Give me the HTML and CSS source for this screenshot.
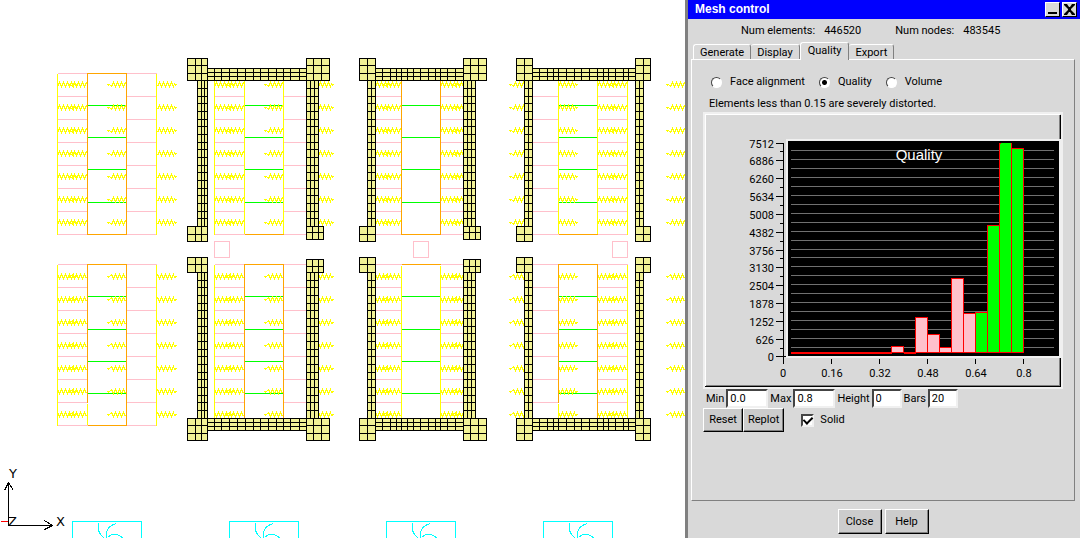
FILE: index.html
```html
<!DOCTYPE html>
<html lang="en">
<head>
    <meta charset="utf-8">
    <title>Mesh control</title>
    <link rel="stylesheet" href="styles.css">
</head>
<body>
    <main class="viewport">
        <svg class="mesh" role="img" aria-label="Mesh view">
            <defs>
                <!-- rungs of the upright beams, three cells per 23px -->
                <pattern id="rungs" patternUnits="userSpaceOnUse" x="0" y="79.5" width="4" height="23">
                    <rect class="cell" width="4" height="23"/>
                    <path class="edge" d="M0 .5h4M0 8.5h4M0 16.5h4"/>
                </pattern>
                <path id="coil-r" d="M0 2L2-2L4 2L6-2L8 2L10-2L12 2L14-2L16 2L17-1L18 0H19M18-1V1"/>
                <path id="coil-l" d="M0 0H3L5 2L7-2L9 2L11-2L13 2L15-2L17 2L19-2M2-1V1"/>
                <g id="springs-r" class="spring">
                    <use href="#coil-r" y="84"/><use href="#coil-r" y="107"/><use href="#coil-r" y="130"/>
                    <use href="#coil-r" y="153"/><use href="#coil-r" y="176"/><use href="#coil-r" y="199"/>
                    <use href="#coil-r" y="222"/>
                </g>
                <g id="springs-l" class="spring">
                    <use href="#coil-l" y="84"/><use href="#coil-l" y="107"/><use href="#coil-l" y="130"/>
                    <use href="#coil-l" y="153"/><use href="#coil-l" y="176"/><use href="#coil-l" y="199"/>
                    <use href="#coil-l" y="222"/>
                </g>
                <g id="core">
                    <path class="pink" d="M0 73H99M0 234H99M0 96H30M0 119H30M0 142H30M0 165H30M0 188H30M0 211H30M69 96H99M69 119H99M69 142H99M69 165H99M69 188H99M69 211H99"/>
                    <path class="green" d="M30 105H69M30 137H69M30 169H69M30 202H69"/>
                </g>
                <g id="half">
                    <use href="#core" x="57"/><use href="#core" x="214"/><use href="#core" x="371"/><use href="#core" x="528"/>
                    <path class="yellow" d="M57 73V234M156 73V234M214 73V234M627 73V234"/>
                    <use href="#springs-r" x="57"/><use href="#springs-l" x="67"/><use href="#springs-l" x="106"/><use href="#springs-r" x="157"/>
                    <use href="#springs-r" x="214"/><use href="#springs-l" x="224"/><use href="#springs-l" x="263"/><use href="#springs-r" x="314"/>
                    <use href="#springs-r" x="371"/><use href="#springs-l" x="381"/><use href="#springs-r" x="440"/><use href="#springs-l" x="450"/>
                    <use href="#springs-l" x="508"/><use href="#springs-r" x="558"/><use href="#springs-r" x="597"/><use href="#springs-l" x="607"/>
                    <use href="#springs-l" x="665"/>
                </g>
                <g id="frames">
                    <g class="upright">
                        <rect x="197" y="80" width="10" height="146"/><rect x="306" y="80" width="12" height="146"/>
                        <rect x="367" y="80" width="8" height="146"/><rect x="463" y="80" width="12" height="146"/>
                        <rect x="524" y="80" width="8" height="146"/><rect x="635" y="80" width="8" height="146"/>
                    </g>
                    <path class="edge" d="M201 80V226M204 80V226M310 80V226M314 80V226M371 80V226M467 80V226M471 80V226M528 80V226M639 80V226"/>
                    <g class="block">
                        <path d="M207 68H306V80H207ZM207 72H306M207 76H306M214 68V80M221 68V80M229 68V80M237 68V80M245 68V80M253 68V80M260 68V80M268 68V80M276 68V80M283 68V80M290 68V80M299 68V80"/>
                        <path d="M375 68H463V80H375ZM375 72H463M375 76H463M382 68V80M390 68V80M396 68V80M401 68V80M407 68V80M413 68V80M420 68V80M428 68V80M435 68V80M440 68V80M447 68V80M455 68V80"/>
                        <path d="M532 68H635V80H532ZM532 72H635M532 76H635M539 68V80M547 68V80M553 68V80M558 68V80M566 68V80M574 68V80M581 68V80M589 68V80M597 68V80M603 68V80M608 68V80M615 68V80M623 68V80M628 68V80"/>
                        <path d="M187 58H207V80H187ZM187 65H207M187 73H207M195 58V80M201 58V80"/>
                        <path d="M306 58H329V80H306ZM306 65H329M306 73H329M313 58V80M321 58V80"/>
                        <path d="M359 58H375V80H359ZM359 65H375M359 73H375M367 58V80"/>
                        <path d="M463 58H486V80H463ZM463 65H486M463 73H486M470 58V80M478 58V80"/>
                        <path d="M516 58H532V80H516ZM516 65H532M516 73H532M524 58V80"/>
                        <path d="M635 58H650V80H635ZM635 65H650M635 73H650M643 58V80"/>
                        <path d="M187 226H207V241H187ZM187 234H207M195 226V241M201 226V241"/>
                        <path d="M306 226H323V239H306ZM306 232H323M312 226V239M318 226V239"/>
                        <path d="M359 226H375V241H359ZM359 234H375M367 226V241"/>
                        <path d="M463 226H480V239H463ZM463 232H480M469 226V239M475 226V239"/>
                        <path d="M516 226H532V241H516ZM516 234H532M524 226V241"/>
                        <path d="M635 226H650V241H635ZM635 234H650M643 226V241"/>
                    </g>
                </g>
                <path id="fan" d="M0 18V0H69V18M26 2Q24 11 32 17M44 2Q32 5 34 17M35 16Q42 9 51 17"/>
            </defs>

            <g transform="translate(.5 .5)">
                <use href="#half"/>
                <use href="#half" transform="matrix(1 0 0 -1 0 498)"/>

                <path class="orange" d="M87 234V73H126V234H87M244 234H283M401 73V234H440V73M558 234H597"/>
                <path class="yellow" d="M244 73V233M283 73V233M558 73V233M597 73V233"/>
                <path class="orange" d="M87 402V264H126V425H87M244 425V264H283V425M401 264H440M558 402V264H597V425"/>
                <path class="yellow" d="M87 403V424M401 265V425M440 265V425M558 403V425"/>

                <use href="#frames"/>
                <use href="#frames" transform="matrix(1 0 0 -1 0 498)"/>
                <path class="pink" d="M214 241h15v16h-15zM413 241h15v16h-15zM612 241h15v16h-15z"/>

                <g class="cyan">
                    <use href="#fan" x="72" y="521"/><use href="#fan" x="229" y="521"/>
                    <use href="#fan" x="386" y="521"/><use href="#fan" x="543" y="521"/>
                </g>

                <path class="red" d="M0 521H8"/>
                <path class="edge" d="M8 482V525H52M4 490L8 482L13 490M44 520L52 525L44 529"/>
            </g>
            <g class="axis-name">
                <text x="9" y="478">Y</text>
                <text x="56" y="526">X</text>
                <text x="8" y="526">Z</text>
            </g>
        </svg>
    </main>

    <section class="panel">
        <header class="titlebar">
            <h1>Mesh control</h1>
            <button class="winbtn" aria-label="Minimize"><svg width="13" height="13"><path d="M2 9h9v2H2z"/></svg></button>
            <button class="winbtn" aria-label="Close window"><svg width="13" height="13"><path d="M1 1h3l2 3h1l2-3h3v1L8 6v1l4 4v1H9L7 9H6l-2 3H1v-1l4-4V6L1 2z"/></svg></button>
        </header>

        <dl class="counts">
            <dt>Num elements:</dt><dd>446520</dd>
            <dt>Num nodes:</dt><dd>483545</dd>
        </dl>

        <nav class="tabs">
            <button class="tab">Generate</button>
            <button class="tab">Display</button>
            <button class="tab active">Quality</button>
            <button class="tab">Export</button>
        </nav>

        <form class="page">
            <div class="modes">
                <label><input type="radio" name="mode">Face alignment</label>
                <label><input type="radio" name="mode" checked>Quality</label>
                <label><input type="radio" name="mode">Volume</label>
            </div>
            <p class="note">Elements less than 0.15 are severely distorted.</p>

            <div class="chart">
                <svg viewBox="705 114 356 273" width="356" height="273" role="img" aria-label="Quality histogram">
                    <path class="shade" d="M1059 115h1v270h-1zM706 385h354v1H706z"/>
                    <path class="dark" d="M1060 115h1v272h-1zM705 386h356v1H705z"/>
                    <path class="light" d="M705 114h355v1H706v271h-1z"/>
                    <rect class="rim" x="786" y="139" width="275" height="219"/>
                    <rect class="dark" x="788" y="141" width="271" height="215"/>
                    <g transform="translate(.5 .5)">
                        <path class="grid" d="M790 150h263M790 159h263M790 168h263M790 177h263M790 186h263M790 195h263M790 204h263M790 213h263M790 222h263M790 231h263M790 240h263M790 249h263M790 257h263M790 266h263M790 275h263M790 284h263M790 293h263M790 302h263M790 311h263M790 320h263M790 329h263M790 338h263M790 347h263"/>
                        <g class="bad">
                            <rect x="891" y="346" width="12" height="6"/>
                            <rect x="915" y="317" width="12" height="35"/>
                            <rect x="927" y="334" width="12" height="18"/>
                            <rect x="939" y="347" width="12" height="5"/>
                            <rect x="951" y="278" width="12" height="74"/>
                            <rect x="963" y="313" width="12" height="39"/>
                        </g>
                        <g class="good">
                            <rect x="975" y="312" width="12" height="40"/>
                            <rect x="987" y="225" width="12" height="127"/>
                            <rect x="999" y="143" width="12" height="209"/>
                            <rect x="1011" y="148" width="12" height="204"/>
                        </g>
                        <path class="red" d="M790 352h101M790 353h101M903 352h12M903 353h12"/>
                        <path class="lime" d="M1000 143h10"/>
                        <path class="axis" d="M783 143V363M775 143h8M775 160h8M775 178h8M775 196h8M775 214h8M775 232h8M775 250h8M775 267h8M775 285h8M775 303h8M775 321h8M775 339h8M775 356h10"/>
                        <path class="axis" d="M779 151h4M779 169h4M779 187h4M779 205h4M779 223h4M779 241h4M779 258h4M779 276h4M779 294h4M779 312h4M779 330h4M779 348h4"/>
                        <path class="axis" d="M831 358v5M879 358v5M927 358v5M975 358v5M1023 358v5"/>
                    </g>
                    <g class="ylabels">
                        <text x="774" y="148">7512</text><text x="774" y="165">6886</text><text x="774" y="183">6260</text>
                        <text x="774" y="201">5634</text><text x="774" y="219">5008</text><text x="774" y="237">4382</text>
                        <text x="774" y="255">3756</text><text x="774" y="272">3130</text><text x="774" y="290">2504</text>
                        <text x="774" y="308">1878</text><text x="774" y="326">1252</text><text x="774" y="344">626</text>
                        <text x="774" y="361">0</text>
                    </g>
                    <g class="xlabels">
                        <text x="783" y="377">0</text><text x="832" y="377">0.16</text><text x="880" y="377">0.32</text>
                        <text x="928" y="377">0.48</text><text x="976" y="377">0.64</text><text x="1024" y="377">0.8</text>
                    </g>
                    <text class="chart-title" x="919" y="160">Quality</text>
                </svg>
            </div>

            <div class="fields">
                <label for="min">Min</label><input type="text" id="min" value="0.0">
                <label for="max">Max</label><input type="text" id="max" value="0.8">
                <label for="height">Height</label><input type="text" id="height" class="short" value="0">
                <label for="bars">Bars</label><input type="text" id="bars" class="short" value="20">
            </div>
            <div class="actions">
                <button type="button" class="btn">Reset</button>
                <button type="button" class="btn">Replot</button>
                <label><input type="checkbox" checked>Solid</label>
            </div>
        </form>

        <footer class="footer">
            <button class="btn wide">Close</button>
            <button class="btn wide">Help</button>
        </footer>
    </section>
</body>
</html>
```
FILE: styles.css
```css
* { box-sizing: border-box; }
body { margin: 0; height: 100vh; display: flex; background: #fff; color: #000; font: 11px/16px Roboto, "Liberation Sans", sans-serif; }
button, input { font: inherit; color: inherit; margin: 0; }

/* mesh view */
.viewport { flex: 1; min-width: 0; overflow: hidden; }
.mesh { display: block; width: 100%; height: 100%; fill: none; shape-rendering: crispEdges; }
.cell { fill: #f2f296; }
.edge { stroke: #000; }
.upright rect { fill: url(#rungs); stroke: #000; }
.block path { fill: #f2f296; stroke: #000; }
.pink { stroke: #ffc0cb; }
.green { stroke: #0f0; }
.orange { stroke: #ffa500; }
.yellow, .spring { stroke: #ff0; }
.cyan { stroke: #0ff; }
.red { stroke: #f00; }
.lime { stroke: #0f0; }
.axis-name { fill: #000; font: 13px "DejaVu Sans", sans-serif; }

/* side panel */
.panel { width: 395px; display: flex; flex-direction: column; background: #d9d9d9; border-left: 3px solid #808080; }
.titlebar { display: flex; align-items: center; gap: 2px; height: 19px; padding: 0 3px 0 7px; background: #00f; color: #fff; }
.titlebar h1 { flex: 1; margin: 0; font: bold 12px/19px "Liberation Sans", sans-serif; }
.winbtn { display: flex; width: 15px; height: 15px; padding: 0; background: #d9d9d9; border: 1px solid; border-color: #fff #000 #000 #fff; }
.counts { display: flex; margin: 4px 0 0 53px; height: 16px; white-space: nowrap; }
.counts dt { margin-right: 9px; }
.counts dd { margin: 0 34px 0 0; }

.tabs { display: flex; align-items: flex-end; height: 20px; margin: 0 8px 0 5px; }
.tab { height: 15px; padding: 1px 6px 0; line-height: 14px; background: none; border: 1px solid; border-color: #fff #808080 transparent #fff; border-bottom: 0; border-radius: 3px 3px 0 0; }
.tab + .tab { border-left: 0; }
.tab.active { height: 18px; margin-bottom: -1px; padding: 1px 7px 2px; background: #d9d9d9; border-left: 1px solid #fff; z-index: 1; }

.page { flex: 1; margin: 0 5px 0 3px; padding: 12px 10px 0 11px; border: 1px solid; border-color: #fff #808080 #808080 #fff; }
.modes { display: flex; gap: 14px; margin-left: 8px; height: 20px; }
.modes label { display: flex; align-items: center; gap: 8px; }
input[type="radio"] { appearance: none; width: 11px; height: 11px; border: 1px solid; border-color: #444 #fff #fff #444; border-radius: 50%; background: #fff; }
input[type="radio"]:checked { background: radial-gradient(circle, #000 0 2px, #fff 3px); }
.note { margin: 4px 0 0 6px; line-height: 16px; }
.chart { width: 360px; margin-top: 0; border: 2px solid #f0f0f0; }
.chart svg { display: block; shape-rendering: crispEdges; }
.chart text { font: 11px Roboto, "Liberation Sans", sans-serif; }
.shade { fill: #808080; }
.dark { fill: #000; }
.light { fill: #fff; }
.rim { fill: #f0f0f0; }
.grid { stroke: #707070; }
.axis { stroke: #000; }
.bad rect { fill: #ffc0cb; stroke: #f00; }
.good rect { fill: #0f0; stroke: #f00; }
.ylabels { text-anchor: end; }
.xlabels { text-anchor: middle; }
.chart .chart-title { fill: #fff; text-anchor: middle; font: 15px "Liberation Sans", sans-serif; }

.fields { display: flex; align-items: center; gap: 2px; margin-left: 3px; height: 19px; }
.fields input { width: 42px; height: 19px; padding: 0 2px; background: #fff; border: 2px solid; border-color: #444 #f0f0f0 #f0f0f0 #444; }
.fields .short { width: 30px; }
.actions { display: flex; align-items: center; }
.actions label { display: flex; align-items: center; gap: 6px; margin-left: 17px; }
input[type="checkbox"] { appearance: none; width: 13px; height: 13px; border: 2px solid; border-color: #444 #f0f0f0 #f0f0f0 #444; background: #fff; display: grid; place-items: center; }
input[type="checkbox"]:checked::before { content: ""; width: 4px; height: 7px; margin-top: -2px; border: solid #000; border-width: 0 2px 2px 0; transform: rotate(45deg); }
.btn { min-width: 40px; height: 24px; padding: 0 4px; background: #ccc; border: 1px solid; border-color: #fff #000 #000 #fff; box-shadow: inset -1px -1px #808080; }
.btn.wide { width: 44px; height: 25px; }
.footer { display: flex; justify-content: center; gap: 3px; padding: 8px 2px 4px 0; }
```
